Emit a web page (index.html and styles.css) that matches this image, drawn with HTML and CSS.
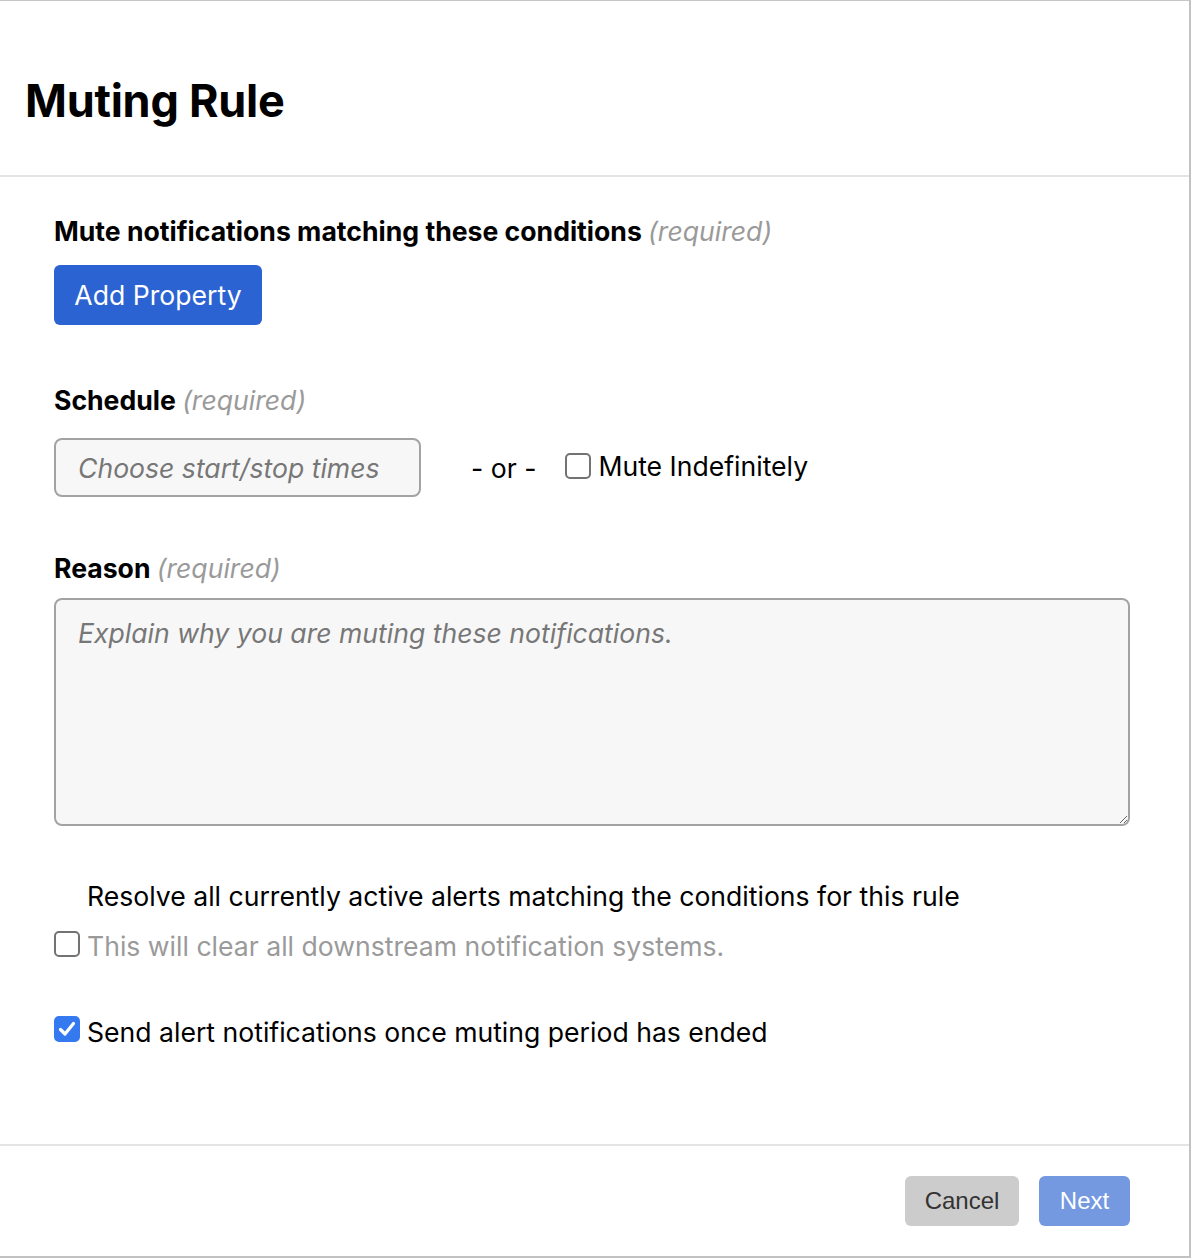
FILE: index.html
```html
<!DOCTYPE html>
<html lang="en">
<head>
<meta charset="utf-8">
<title>Muting Rule</title>
<link rel="stylesheet" href="styles.css">
</head>
<body>
<div class="modal">
  <header class="modal-header">
    <h1 class="modal-title">Muting Rule</h1>
  </header>
  <main class="modal-body">
    <div class="field-label">Mute notifications matching these conditions <span class="req">(required)</span></div>
    <button class="btn-primary" type="button">Add Property</button>

    <div class="field-label label-schedule">Schedule <span class="req">(required)</span></div>
    <div class="schedule-row">
      <input class="time-input" type="text" placeholder="Choose start/stop times">
      <span class="or">- or -</span>
      <label class="check-label">
        <span class="box"></span>
        <span>Mute Indefinitely</span>
      </label>
    </div>

    <div class="field-label label-reason">Reason <span class="req">(required)</span></div>
    <textarea class="reason" placeholder="Explain why you are muting these notifications."></textarea>

    <div class="resolve">
      <span></span>
      <span class="resolve-title">Resolve all currently active alerts matching the conditions for this rule</span>
      <span class="box"></span>
      <span class="resolve-desc">This will clear all downstream notification systems.</span>
    </div>

    <label class="check-label send">
      <span class="box checked">
        <svg width="18" height="16" viewBox="0 0 18 16"><path d="M2.5 8.5 L7 13 L15.5 2.5" fill="none" stroke="#fff" stroke-width="3.2" stroke-linecap="round" stroke-linejoin="round"/></svg>
      </span>
      <span>Send alert notifications once muting period has ended</span>
    </label>
  </main>
  <footer class="modal-footer">
    <button class="btn-cancel" type="button">Cancel</button>
    <button class="btn-next" type="button">Next</button>
  </footer>
</div>
</body>
</html>
```
FILE: styles.css
```css
html, body {
  margin: 0;
  padding: 0;
  background: #ffffff;
}
body {
  font-family: "Inter", "Noto Sans", sans-serif;
  color: #000;
}
.modal {
  width: 1189px;
  height: 1255px;
  border-top: 1px solid #c6c6c6;
  border-right: 2px solid #c2c2c2;
  border-bottom: 2px solid #c2c2c2;
  display: flex;
  flex-direction: column;
  box-sizing: content-box;
}
.modal-header {
  height: 176px;
  flex: none;
  border-bottom: 2px solid #e4e4e4;
  padding: 0 25px;
  box-sizing: border-box;
}
.modal-title {
  margin: 0;
  padding-top: 77px;
  font-size: 45px;
  line-height: 45px;
  font-weight: 700;
  letter-spacing: -0.25px;
}
.modal-body {
  flex: 1;
  padding: 38px 60px 0 54px;
  display: flex;
  flex-direction: column;
  align-items: flex-start;
  font-size: 26.6px;
}
.field-label {
  font-weight: 700;
  font-size: 26.6px;
  line-height: 32px;
}
.req {
  font-weight: 400;
  font-style: italic;
  color: #9a9a9a;
}
.btn-primary {
  margin-top: 18px;
  height: 60px;
  width: 208px;
  border: none;
  border-radius: 6px;
  background: #2c63d3;
  color: #fff;
  font-family: inherit;
  font-size: 26.6px;
  padding: 0;
}
.label-schedule { margin-top: 59px; }
.schedule-row {
  margin-top: 22px;
  display: flex;
  align-items: center;
}
.time-input {
  width: 367px;
  height: 59px;
  box-sizing: border-box;
  border: 2px solid #a3a3a3;
  border-radius: 8px;
  background: #f7f7f7;
  font-family: inherit;
  font-size: 26.6px;
  padding: 0 22px;
  outline: none;
}
.time-input::placeholder,
.reason::placeholder {
  color: #777;
  font-style: italic;
}
.or {
  margin-left: 50px;
  font-size: 26.6px;
}
.check-label {
  display: flex;
  align-items: center;
  gap: 7px;
  font-size: 26.6px;
}
.schedule-row .check-label {
  margin-left: 29px;
  margin-top: -4px;
}
.box {
  width: 26px;
  height: 26px;
  flex: none;
  box-sizing: border-box;
  border: 2px solid #737373;
  border-radius: 5px;
  background: #fff;
  display: inline-flex;
  align-items: center;
  justify-content: center;
}
.box.checked {
  border-color: #3579f0;
  background: #3579f0;
}
.label-reason { margin-top: 55px; }
.reason {
  margin-top: 14px;
  width: 1076px;
  height: 228px;
  box-sizing: border-box;
  border: 2px solid #a3a3a3;
  border-radius: 8px;
  background: #f7f7f7;
  font-family: inherit;
  font-size: 26.6px;
  line-height: 32px;
  padding: 17px 22px;
  outline: none;
  resize: vertical;
}
.resolve {
  margin-top: 54px;
  display: grid;
  grid-template-columns: 26px auto;
  column-gap: 7px;
  row-gap: 18px;
  align-items: center;
  line-height: 32px;
  font-size: 26.6px;
}
.resolve .box { margin-top: -5px; }
.resolve-desc { color: #9a9a9a; }
.send {
  margin-top: 54px;
  gap: 7px;
  line-height: 32px;
}
.send .box { margin-top: -6px; }
.modal-footer {
  height: 112px;
  flex: none;
  border-top: 2px solid #e4e4e4;
  box-sizing: border-box;
  display: flex;
  justify-content: flex-end;
  align-items: flex-start;
  gap: 20px;
  padding: 30px 59px 0 0;
}
.btn-cancel, .btn-next {
  height: 50px;
  border: none;
  border-radius: 6px;
  font-family: "Liberation Sans", Arial, sans-serif;
  font-size: 24px;
  padding: 0;
}
.btn-cancel {
  width: 114px;
  background: #cccccc;
  color: #333;
}
.btn-next {
  width: 91px;
  background: #7499e1;
  color: #fff;
}
```
